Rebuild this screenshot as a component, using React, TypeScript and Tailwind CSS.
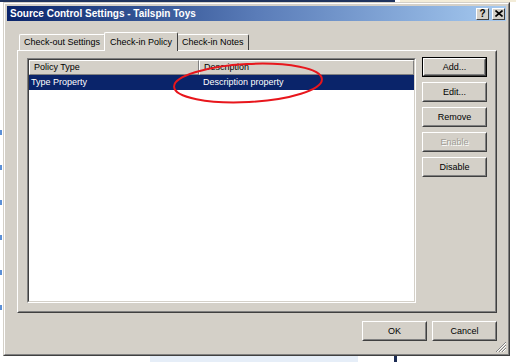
import React from 'react';

const font = { fontFamily: '"Liberation Sans", Arial, sans-serif' };

function Btn({ label, disabled, def }: { label: string; disabled?: boolean; def?: boolean }) {
  return (
    <div className={`w-[65px] h-[20px] ${def ? 'border border-black' : ''}`}>
      <div className="w-full h-full border border-t-white border-l-white border-r-[#404040] border-b-[#404040] bg-[#d4d0c8]">
        <div className="w-full h-full border border-transparent border-r-[#808080] border-b-[#808080] flex items-center justify-center text-[9px] leading-none">
          <span className={disabled ? 'text-[#a09d96] [text-shadow:1px_1px_0_#fff]' : 'text-black'}>{label}</span>
        </div>
      </div>
    </div>
  );
}

function CapBtn({ children }: { children: React.ReactNode }) {
  return (
    <div className="w-[13px] h-[12px] bg-[#d4d0c8] border border-t-white border-l-white border-r-[#404040] border-b-[#404040] flex items-center justify-center text-[10px] font-bold leading-none text-black">
      {children}
    </div>
  );
}

function Tab({ label, active }: { label: string; active?: boolean }) {
  return (
    <div
      className={`flex items-center border-l border-t border-t-white border-l-white border-r border-r-[#404040] rounded-t-[2px] bg-[#d4d0c8] text-[9px] leading-none ${
        active ? 'h-[19px] px-[5px] -mb-[1px] relative z-10 -mx-[1px]' : 'h-[16px] px-[4px]'
      }`}
    >
      {label}
    </div>
  );
}

export default function App() {
  return (
    <div className="w-[516px] h-[362px] bg-white relative overflow-hidden" style={font}>
      {/* background bits */}
      <div className="absolute left-0 top-0 w-[395px] h-[2px] bg-[#20345e]" />
      <div className="absolute left-[400px] top-0 w-[116px] h-[2px] bg-[#f3ecd8]" />
      <div className="absolute left-[150px] top-[356px] w-[208px] h-[6px] bg-[#e6eef8]" />
      <div className="absolute left-[394px] top-[356px] w-[3px] h-[6px] bg-[#1c2c54]" />
      <div className="absolute left-0 top-[130px] w-[3px] h-[200px] flex flex-col gap-[30px]">
        {[0, 1, 2, 3, 4, 5].map((i) => (
          <div key={i} className="w-[2px] h-[5px] bg-[#5b8fd6]" />
        ))}
      </div>

      {/* dialog */}
      <div className="absolute left-[3px] top-[2px] w-[507px] h-[354px] bg-[#d4d0c8] border border-t-[#d4d0c8] border-l-[#d4d0c8] border-r-[#404040] border-b-[#404040]">
        <div className="w-full h-full border border-t-white border-l-white border-r-[#808080] border-b-[#808080] p-[2px] flex flex-col">
          {/* title bar */}
          <div className="h-[15px] bg-gradient-to-r from-[#0a246a] via-[#5a7cb8] to-[#a6caf0] flex items-center justify-between pl-[3px] pr-[1px]">
            <span className="text-white font-bold text-[10px] leading-none">Source Control Settings - Tailspin Toys</span>
            <div className="flex gap-[3px]">
              <CapBtn>?</CapBtn>
              <CapBtn>
                <svg width="8" height="7" viewBox="0 0 8 7">
                  <path d="M0.5 0.5 L7.5 6.5 M7.5 0.5 L0.5 6.5" stroke="#000" strokeWidth="1.6" />
                </svg>
              </CapBtn>
            </div>
          </div>

          {/* body */}
          <div className="flex-1 flex flex-col pl-[10px] pr-[9px] pt-[11px]">
            <div className="flex items-end pl-[2px] h-[18px]">
              <Tab label="Check-out Settings" />
              <Tab label="Check-in Policy" active />
              <Tab label="Check-in Notes" />
            </div>
            {/* panel */}
            <div className="h-[263px] border border-t-white border-l-white border-r-[#404040] border-b-[#404040]">
              <div className="w-full h-full border border-transparent border-r-[#808080] border-b-[#808080] flex pl-[8px] pt-[6px] pb-[8px] gap-[6px]">
                {/* list */}
                <div className="w-[389px] h-full border border-t-[#808080] border-l-[#808080] border-r-white border-b-white">
                  <div className="w-full h-full border border-t-[#404040] border-l-[#404040] border-r-[#d4d0c8] border-b-[#d4d0c8] bg-white flex flex-col">
                    <div className="flex h-[15px] text-[9px] leading-none">
                      <div className="w-[170px] bg-[#d4d0c8] border border-t-white border-l-white border-r-[#808080] border-b-[#808080] flex items-center pl-[4px] text-black">
                        Policy Type
                      </div>
                      <div className="flex-1 bg-[#d4d0c8] border border-t-white border-l-white border-r-[#808080] border-b-[#808080] flex items-center pl-[4px] text-black">
                        Description
                      </div>
                    </div>
                    <div className="flex h-[15px] bg-[#0a246a] text-white text-[9px] leading-none items-center">
                      <div className="w-[170px] pl-[2px]">Type Property</div>
                      <div className="flex-1 pl-[4px]">Description property</div>
                    </div>
                  </div>
                </div>
                {/* buttons */}
                <div className="flex flex-col gap-[5px] -mt-[1px]">
                  <Btn label="Add..." def />
                  <Btn label="Edit..." />
                  <Btn label="Remove" />
                  <Btn label="Enable" disabled />
                  <Btn label="Disable" />
                </div>
              </div>
            </div>

            {/* ok/cancel */}
            <div className="flex justify-end gap-[5px] pt-[8px]">
              <Btn label="OK" />
              <Btn label="Cancel" />
            </div>
          </div>
        </div>
        {/* grip */}
        <svg className="absolute right-[2px] bottom-[2px]" width="12" height="12" viewBox="0 0 12 12">
          <path d="M11 1 L1 11 M11 4 L4 11 M11 7 L7 11" stroke="#808080" strokeWidth="1" />
          <path d="M11 2 L2 11 M11 5 L5 11 M11 8 L8 11" stroke="#fff" strokeWidth="1" />
        </svg>
      </div>

      {/* red annotation ellipse */}
      <svg className="absolute left-[168px] top-[58px] pointer-events-none" width="160" height="50" viewBox="0 0 160 50">
        <ellipse cx="80" cy="25" rx="74" ry="19" fill="none" stroke="#e8161c" strokeWidth="2" transform="rotate(-3 80 25)" />
      </svg>
    </div>
  );
}
